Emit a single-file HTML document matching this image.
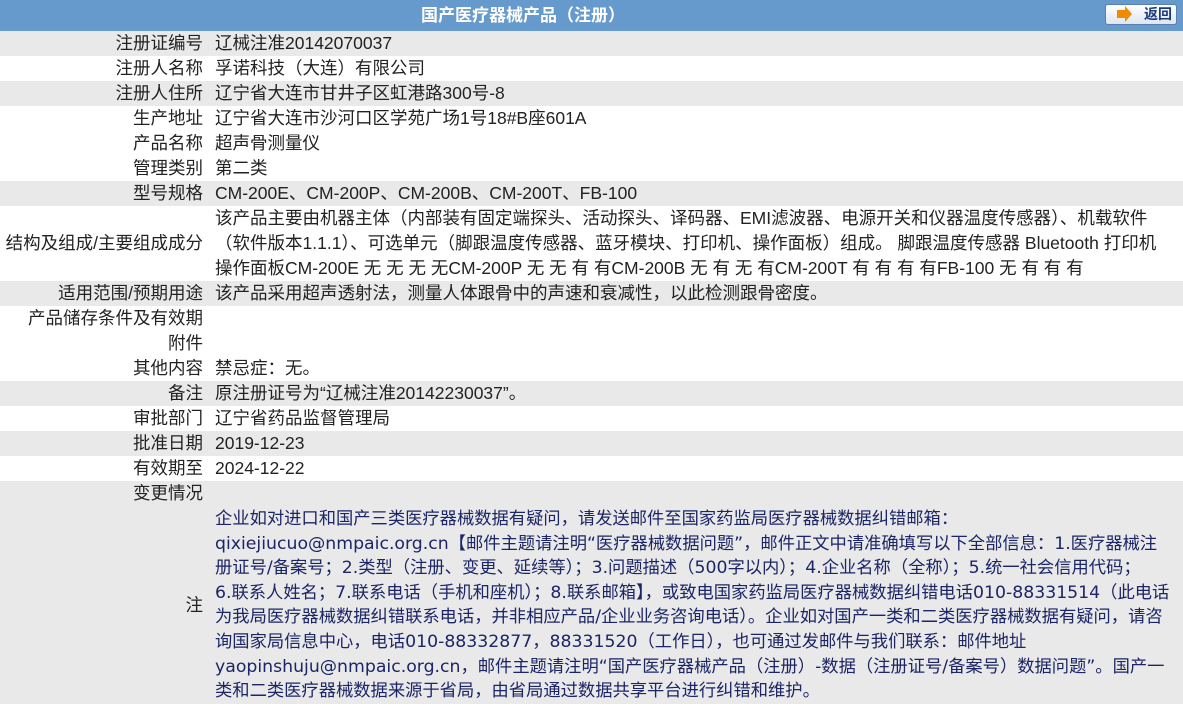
<!DOCTYPE html>
<html><head><meta charset="utf-8"><style>
*{margin:0;padding:0;box-sizing:border-box}
body{width:1183px;height:709px;overflow:hidden;background:#fff;font-family:"Liberation Sans","Noto Sans CJK SC",sans-serif;font-size:17.5px;color:#222}
.hd{height:31px;background:#6699cc;position:relative;color:#fff;font-weight:bold;line-height:31px;font-size:17px}
.hd .t{width:1046px;text-align:center}
.btn{position:absolute;left:1105px;top:4px;width:72px;height:21px;border:1px solid #5a7fae;border-radius:3px;background:linear-gradient(#fff,#dde6f0);line-height:19px;font-size:14px;color:#1d3c7a;text-align:left}
.btn .ar{position:absolute;left:11px;top:5px;width:8px;height:8px;background:#f08a00}
.btn .ar:after{content:"";position:absolute;left:8px;top:-4px;border-left:7px solid #f08a00;border-top:8px solid transparent;border-bottom:8px solid transparent}
.btn span{position:absolute;left:38px;top:0}
.r{display:flex;white-space:nowrap;overflow:hidden}
.g{background:#e9e9e9}
.l{width:203px;flex:none;text-align:right;display:flex;flex-direction:column;justify-content:center}
.v{padding-left:12px;flex:1;overflow:hidden}
.r div{line-height:25px}
.n .v{font-family:"DejaVu Sans","Noto Sans CJK SC",sans-serif;font-size:17.3px}
.n .v div{line-height:24.6px;color:#1c2566}
</style></head><body>
<div class="hd"><div class="t">国产医疗器械产品（注册）</div><div class="btn"><i class="ar"></i><span>返回</span></div></div>
<div class="r g"><div class="l">注册证编号</div><div class="v">辽械注准20142070037</div></div>
<div class="r"><div class="l">注册人名称</div><div class="v">孚诺科技（大连）有限公司</div></div>
<div class="r g"><div class="l">注册人住所</div><div class="v">辽宁省大连市甘井子区虹港路300号-8</div></div>
<div class="r"><div class="l">生产地址</div><div class="v">辽宁省大连市沙河口区学苑广场1号18#B座601A</div></div>
<div class="r"><div class="l">产品名称</div><div class="v">超声骨测量仪</div></div>
<div class="r"><div class="l">管理类别</div><div class="v">第二类</div></div>
<div class="r g"><div class="l">型号规格</div><div class="v">CM-200E、CM-200P、CM-200B、CM-200T、FB-100</div></div>
<div class="r"><div class="l">结构及组成/主要组成成分</div><div class="v"><div>该产品主要由机器主体（内部装有固定端探头、活动探头、译码器、EMI滤波器、电源开关和仪器温度传感器）、机载软件</div><div>（软件版本1.1.1）、可选单元（脚跟温度传感器、蓝牙模块、打印机、操作面板）组成。 脚跟温度传感器 Bluetooth 打印机</div><div>操作面板CM-200E 无 无 无 无CM-200P 无 无 有 有CM-200B 无 有 无 有CM-200T 有 有 有 有FB-100 无 有 有 有</div></div></div>
<div class="r g"><div class="l">适用范围/预期用途</div><div class="v">该产品采用超声透射法，测量人体跟骨中的声速和衰减性，以此检测跟骨密度。</div></div>
<div class="r"><div class="l">产品储存条件及有效期</div><div class="v"></div></div>
<div class="r"><div class="l">附件</div><div class="v"></div></div>
<div class="r"><div class="l">其他内容</div><div class="v">禁忌症：无。</div></div>
<div class="r g"><div class="l">备注</div><div class="v">原注册证号为“辽械注准20142230037”。</div></div>
<div class="r"><div class="l">审批部门</div><div class="v">辽宁省药品监督管理局</div></div>
<div class="r g"><div class="l">批准日期</div><div class="v">2019-12-23</div></div>
<div class="r"><div class="l">有效期至</div><div class="v">2024-12-22</div></div>
<div class="r g"><div class="l">变更情况</div><div class="v"></div></div>
<div class="r g n" style="height:198px;padding-top:1px"><div class="l">注</div><div class="v">
<div>企业如对进口和国产三类医疗器械数据有疑问，请发送邮件至国家药监局医疗器械数据纠错邮箱：</div>
<div>qixiejiucuo@nmpaic.org.cn【邮件主题请注明“医疗器械数据问题”，邮件正文中请准确填写以下全部信息：1.医疗器械注</div>
<div>册证号/备案号；2.类型（注册、变更、延续等）；3.问题描述（500字以内）；4.企业名称（全称）；5.统一社会信用代码；</div>
<div>6.联系人姓名；7.联系电话（手机和座机）；8.联系邮箱】，或致电国家药监局医疗器械数据纠错电话010-88331514（此电话</div>
<div>为我局医疗器械数据纠错联系电话，并非相应产品/企业业务咨询电话）。企业如对国产一类和二类医疗器械数据有疑问，请咨</div>
<div>询国家局信息中心，电话010-88332877，88331520（工作日），也可通过发邮件与我们联系：邮件地址</div>
<div>yaopinshuju@nmpaic.org.cn，邮件主题请注明“国产医疗器械产品（注册）-数据（注册证号/备案号）数据问题”。国产一</div>
<div>类和二类医疗器械数据来源于省局，由省局通过数据共享平台进行纠错和维护。</div>
</div></div>
</body></html>
